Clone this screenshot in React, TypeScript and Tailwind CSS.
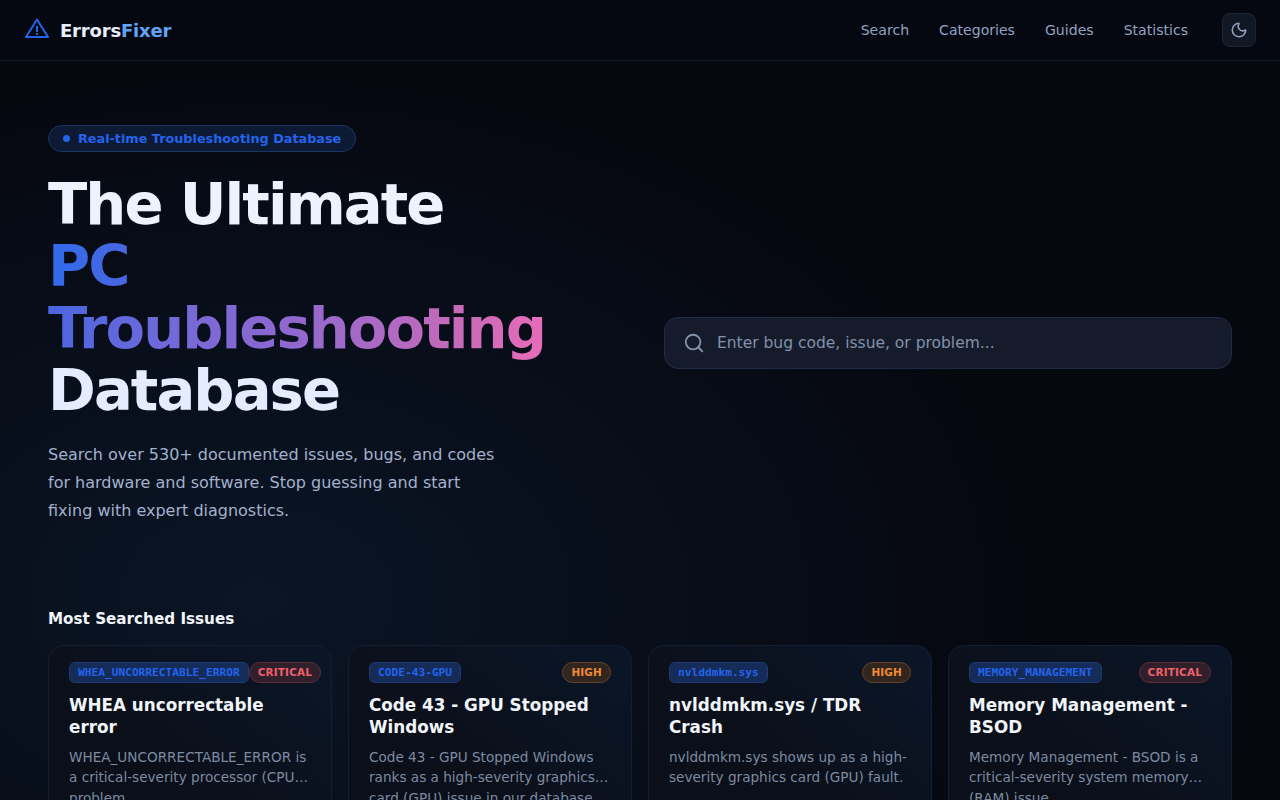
import { Moon, Search } from "lucide-react";

const cards = [
  { code: "WHEA_UNCORRECTABLE_ERROR", sev: "CRITICAL", title: "WHEA uncorrectable error", lines: ["WHEA_UNCORRECTABLE_ERROR is", "a critical-severity processor (CPU…", "problem"] },
  { code: "CODE-43-GPU", sev: "HIGH", title: "Code 43 - GPU Stopped Windows", lines: ["Code 43 - GPU Stopped Windows", "ranks as a high-severity graphics…", "card (GPU) issue in our database"] },
  { code: "nvlddmkm.sys", sev: "HIGH", title: "nvlddmkm.sys / TDR Crash", lines: ["nvlddmkm.sys shows up as a high-", "severity graphics card (GPU) fault."] },
  { code: "MEMORY_MANAGEMENT", sev: "CRITICAL", title: "Memory Management - BSOD", lines: ["Memory Management - BSOD is a", "critical-severity system memory…", "(RAM) issue"] },
];

function Card({ c }: { c: (typeof cards)[number] }) {
  const critical = c.sev === "CRITICAL";
  return (
    <div className="h-[220px] rounded-2xl border border-[#141e30] bg-gradient-to-bl from-[#0a1628] to-[#0b0f19] to-60% px-5 pt-4">
      <div className="flex items-start justify-between">
        <span className="rounded-md border border-[#1d3b73] bg-[#152c58] px-2 py-[2px] font-['DejaVu_Sans_Mono',monospace] text-[11.2px] leading-[15px] font-semibold text-[#2563eb]">
          {c.code}
        </span>
        <span
          className={
            critical
              ? "rounded-full border border-[#5f2c38] bg-[#2f202c] px-2 py-[2px] text-[10.4px] leading-[15px] font-bold tracking-[0.02em] text-[#f0616d]"
              : "rounded-full border border-[#6b4228] bg-[#31261f] px-2 py-[2px] text-[10.4px] leading-[15px] font-bold tracking-[0.02em] text-[#f58a32]"
          }
        >
          {c.sev}
        </span>
      </div>
      <h3 className="mt-[11px] text-[16.8px] leading-[22px] font-semibold text-[#f1f5f9]">{c.title}</h3>
      <p className="mt-[9px] whitespace-nowrap text-[13.6px] leading-[20.4px] text-[#7c8ba1]">
        {c.lines.map((l) => (
          <span key={l} className="block">{l}</span>
        ))}
      </p>
    </div>
  );
}

export default function App() {
  return (
    <div className="h-screen overflow-hidden bg-[radial-gradient(ellipse_60%_65%_at_20%_75%,#0a1525_0%,#060810_100%)] font-['DejaVu_Sans',sans-serif] text-[#f1f5f9]">
      <header className="flex h-[61px] items-center justify-between border-b border-[#111c2c] bg-[#050811] px-6">
        <div className="flex items-center gap-[10px]">
          <svg viewBox="0 0 26 24" className="h-[24px] w-[26px] -translate-y-[2px] text-[#2563eb]" fill="none" stroke="currentColor" strokeWidth="2" strokeLinejoin="round" strokeLinecap="round">
            <path d="M13 3.5 2 21h22L13 3.5Z" />
            <path d="M13 10v6" strokeLinecap="butt" />
            <path d="M12 18h2" strokeLinecap="butt" />
          </svg>
          <span className="pt-[2px] text-lg leading-[28px] font-bold tracking-[-0.01em]">
            <span className="text-[#e8eefb]">Errors</span>
            <span className="text-[#60a5fa]">Fixer</span>
          </span>
        </div>
        <nav className="flex items-center">
          <div className="flex items-center gap-[30px] pt-[2px] text-[14.08px] text-[#94a3c0]">
            <span>Search</span>
            <span>Categories</span>
            <span>Guides</span>
            <span>Statistics</span>
          </div>
          <button className="ml-[34px] flex h-[34px] w-[34px] items-center justify-center rounded-lg border border-[#1c2433] bg-[#121823] text-[#94a3c0]">
            <Moon className="h-[18px] w-[18px]" strokeWidth={2} />
          </button>
        </nav>
      </header>

      <main className="px-12">
        <section className="grid grid-cols-2 items-center gap-12 pt-16">
          <div className="pb-9">
            <div className="inline-flex h-[27px] items-center gap-2 rounded-full border border-[#1b3565] bg-[#0c1a33] px-[14px] text-[12.8px] font-semibold text-[#2563eb]">
              <span className="h-[7px] w-[7px] rounded-full bg-[#2563eb]" />
              Real-time Troubleshooting Database
            </div>
            <h1 className="mt-[22px] text-[57.6px] leading-[62px] font-extrabold tracking-[-1.93px] text-[#e5ecfd]">
              <span className="block text-[#eef2ff]">The Ultimate</span>
              <span className="bg-[linear-gradient(90deg,#2f6bec,#4a66e0_14%,#7569d8_37%,#8f68cf_56%,#c86ab8_86%,#e86cb8)] bg-clip-text text-transparent">
                PC Troubleshooting
              </span>
              <span className="block">Database</span>
            </h1>
            <p className="mt-[19px] max-w-[450px] text-base leading-[28px] text-[#a3b1cc]">
              Search over 530+ documented issues, bugs, and codes for hardware and software. Stop guessing and start fixing with expert diagnostics.
            </p>
          </div>
          <div className="flex h-[52px] items-center gap-3 rounded-[14px] border border-[#1e2c45] bg-[#151b2a] px-[18px]">
            <Search className="h-[22px] w-[22px] text-[#8292ab]" strokeWidth={2} />
            <span className="pt-[2px] text-[15.5px] text-[#8292ab]">Enter bug code, issue, or problem...</span>
          </div>
        </section>

        <h2 className="mt-[46px] text-[15.2px] leading-[24px] font-semibold text-[#f1f5f9]">Most Searched Issues</h2>
        <div className="mt-[14px] grid grid-cols-4 gap-4">
          {cards.map((c) => (
            <Card key={c.code} c={c} />
          ))}
        </div>
      </main>
    </div>
  );
}
